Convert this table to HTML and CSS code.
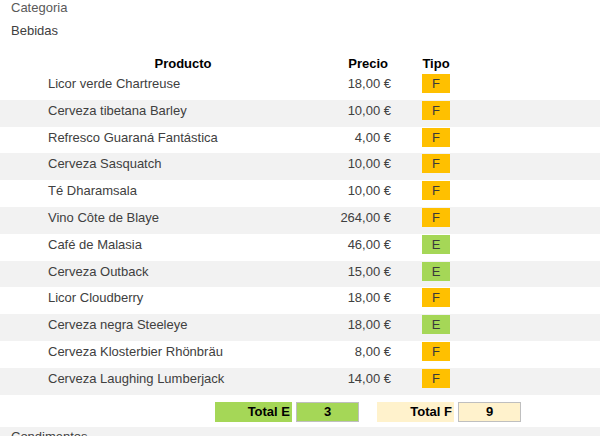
FILE: index.html
```html
<!DOCTYPE html>
<html lang="es">
<head>
<meta charset="utf-8">
<link rel="stylesheet" href="styles.css">
</head>
<body>
<div class="label">Categoria</div>
<div class="category">Bebidas</div>
<div class="head">
  <div class="h-prod">Producto</div>
  <div class="h-price">Precio</div>
  <div class="h-tipo">Tipo</div>
</div>
<div class="rows">
  <div class="row"><div class="prod">Licor verde Chartreuse</div><div class="price">18,00 €</div><div class="badge f">F</div></div>
  <div class="row alt"><div class="prod">Cerveza tibetana Barley</div><div class="price">10,00 €</div><div class="badge f">F</div></div>
  <div class="row"><div class="prod">Refresco Guaraná Fantástica</div><div class="price">4,00 €</div><div class="badge f">F</div></div>
  <div class="row alt"><div class="prod">Cerveza Sasquatch</div><div class="price">10,00 €</div><div class="badge f">F</div></div>
  <div class="row"><div class="prod">Té Dharamsala</div><div class="price">10,00 €</div><div class="badge f">F</div></div>
  <div class="row alt"><div class="prod">Vino Côte de Blaye</div><div class="price">264,00 €</div><div class="badge f">F</div></div>
  <div class="row"><div class="prod">Café de Malasia</div><div class="price">46,00 €</div><div class="badge e">E</div></div>
  <div class="row alt"><div class="prod">Cerveza Outback</div><div class="price">15,00 €</div><div class="badge e">E</div></div>
  <div class="row"><div class="prod">Licor Cloudberry</div><div class="price">18,00 €</div><div class="badge f">F</div></div>
  <div class="row alt"><div class="prod">Cerveza negra Steeleye</div><div class="price">18,00 €</div><div class="badge e">E</div></div>
  <div class="row"><div class="prod">Cerveza Klosterbier Rhönbräu</div><div class="price">8,00 €</div><div class="badge f">F</div></div>
  <div class="row alt"><div class="prod">Cerveza Laughing Lumberjack</div><div class="price">14,00 €</div><div class="badge f">F</div></div>
</div>
<div class="totals">
  <div class="t-label green">Total E</div>
  <div class="t-value green">3</div>
  <div class="t-label cream gap">Total F</div>
  <div class="t-value cream">9</div>
</div>
<div class="next">Condimentos</div>
</body>
</html>
```
FILE: styles.css
```css
html, body {
  margin: 0;
  padding: 0;
  background: #ffffff;
  font-family: "Liberation Sans", Arial, sans-serif;
  font-size: 13px;
  color: #404040;
  overflow: hidden;
}
.label {
  padding-left: 11px;
  height: 16px;
  line-height: 16px;
  color: #595959;
}
.category {
  padding-left: 11px;
  margin-top: 6px;
  height: 18px;
  line-height: 18px;
  color: #404040;
}
.head {
  margin-top: 14px;
  display: grid;
  grid-template-columns: 270px 70px 34px 28px;
  padding-left: 48px;
  height: 19px;
  line-height: 19px;
  font-weight: bold;
  color: #000;
}
.h-prod { text-align: center; }
.h-price { text-align: right; }
.h-tipo { grid-column: 4; text-align: center; }
.rows {
  margin-top: 0;
}
.row {
  display: grid;
  grid-template-columns: 250px 93px 31px 28px;
  padding-left: 48px;
  height: 26.8px;
  box-sizing: border-box;
  padding-top: 1px;
  line-height: 19px;
}
.row.alt { background: #f2f2f2; }
.price { text-align: right; }
.badge {
  grid-column: 4;
  height: 19px;
  text-align: center;
  color: #3a3a3a;
}
.badge.f { background: #ffc000; }
.badge.e { background: #a5d757; }
.totals {
  margin-top: 7px;
  display: flex;
  padding-left: 215px;
  height: 20px;
  font-weight: bold;
  color: #000;
}
.t-label {
  width: 77px;
  box-sizing: border-box;
  padding-right: 2px;
  text-align: right;
  line-height: 20px;
}
.t-value {
  margin-left: 4px;
  width: 63px;
  box-sizing: border-box;
  border: 1px solid #bfbfbf;
  text-align: center;
  line-height: 18px;
}
.gap { margin-left: 18px; }
.green { background: #a5d757; }
.cream { background: #fff2cc; }
.next {
  margin-top: 5px;
  background: #f2f2f2;
  padding-left: 11px;
  padding-top: 2px;
  height: 30px;
  line-height: 16px;
  color: #404040;
}
```
